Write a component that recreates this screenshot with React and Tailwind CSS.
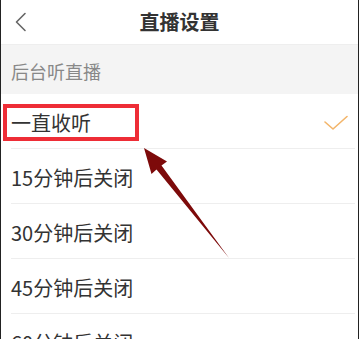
import React from "react";

const rows = ["一直收听", "15分钟后关闭", "30分钟后关闭", "45分钟后关闭", "60分钟后关闭"];

export default function App() {
  return (
    <div
      className="relative w-[359px] h-[339px] overflow-hidden bg-white border-x border-[#222]"
      style={{ fontFamily: '"Noto Sans CJK SC", "Noto Sans", sans-serif' }}
    >
      <div className="relative h-[45px] flex items-center justify-center border-b border-[#eeeeee]">
        <svg className="absolute left-[13px] top-[12px]" width="14" height="20" viewBox="0 0 14 20">
          <path d="M11 1.5 L2.5 10 L11 18.5" fill="none" stroke="#666" strokeWidth="1.6" strokeLinecap="round" strokeLinejoin="round" />
        </svg>
        <span className="text-[20px] font-bold text-[#333] leading-none">直播设置</span>
      </div>
      <div className="h-[49px] bg-[#f4f4f4] flex items-center pl-[10px] pt-[3px] text-[18px] text-[#888] leading-none">
        后台听直播
      </div>
      <div className="flex flex-col">
        {rows.map((r, i) => (
          <div
            key={r}
            className="ml-[10px] mr-[3px] h-[55px] shrink-0 border-b border-[#eeeeee] flex items-center justify-between pt-[4px] pr-[7px]"
          >
            <span className="text-[20px] text-[#333] leading-none">{r}</span>
            {i === 0 && (
              <svg width="24" height="16" viewBox="0 0 24 16">
                <path d="M1 7 L9 14 L23 1.5" fill="none" stroke="#f3b56a" strokeWidth="1.6" strokeLinecap="round" strokeLinejoin="round" />
              </svg>
            )}
          </div>
        ))}
      </div>
      <div className="absolute left-[2px] top-[104px] w-[136px] h-[37px] border-[4px] border-[#ee2d36]" />
      <svg className="absolute left-0 top-0 pointer-events-none" width="359" height="339" viewBox="0 0 359 339">
        <polygon
          points="143,148 166,161.5 160.5,165.5 228,258 155.5,169.5 150.5,174"
          fill="#7d0a0a"
        />
      </svg>
    </div>
  );
}
